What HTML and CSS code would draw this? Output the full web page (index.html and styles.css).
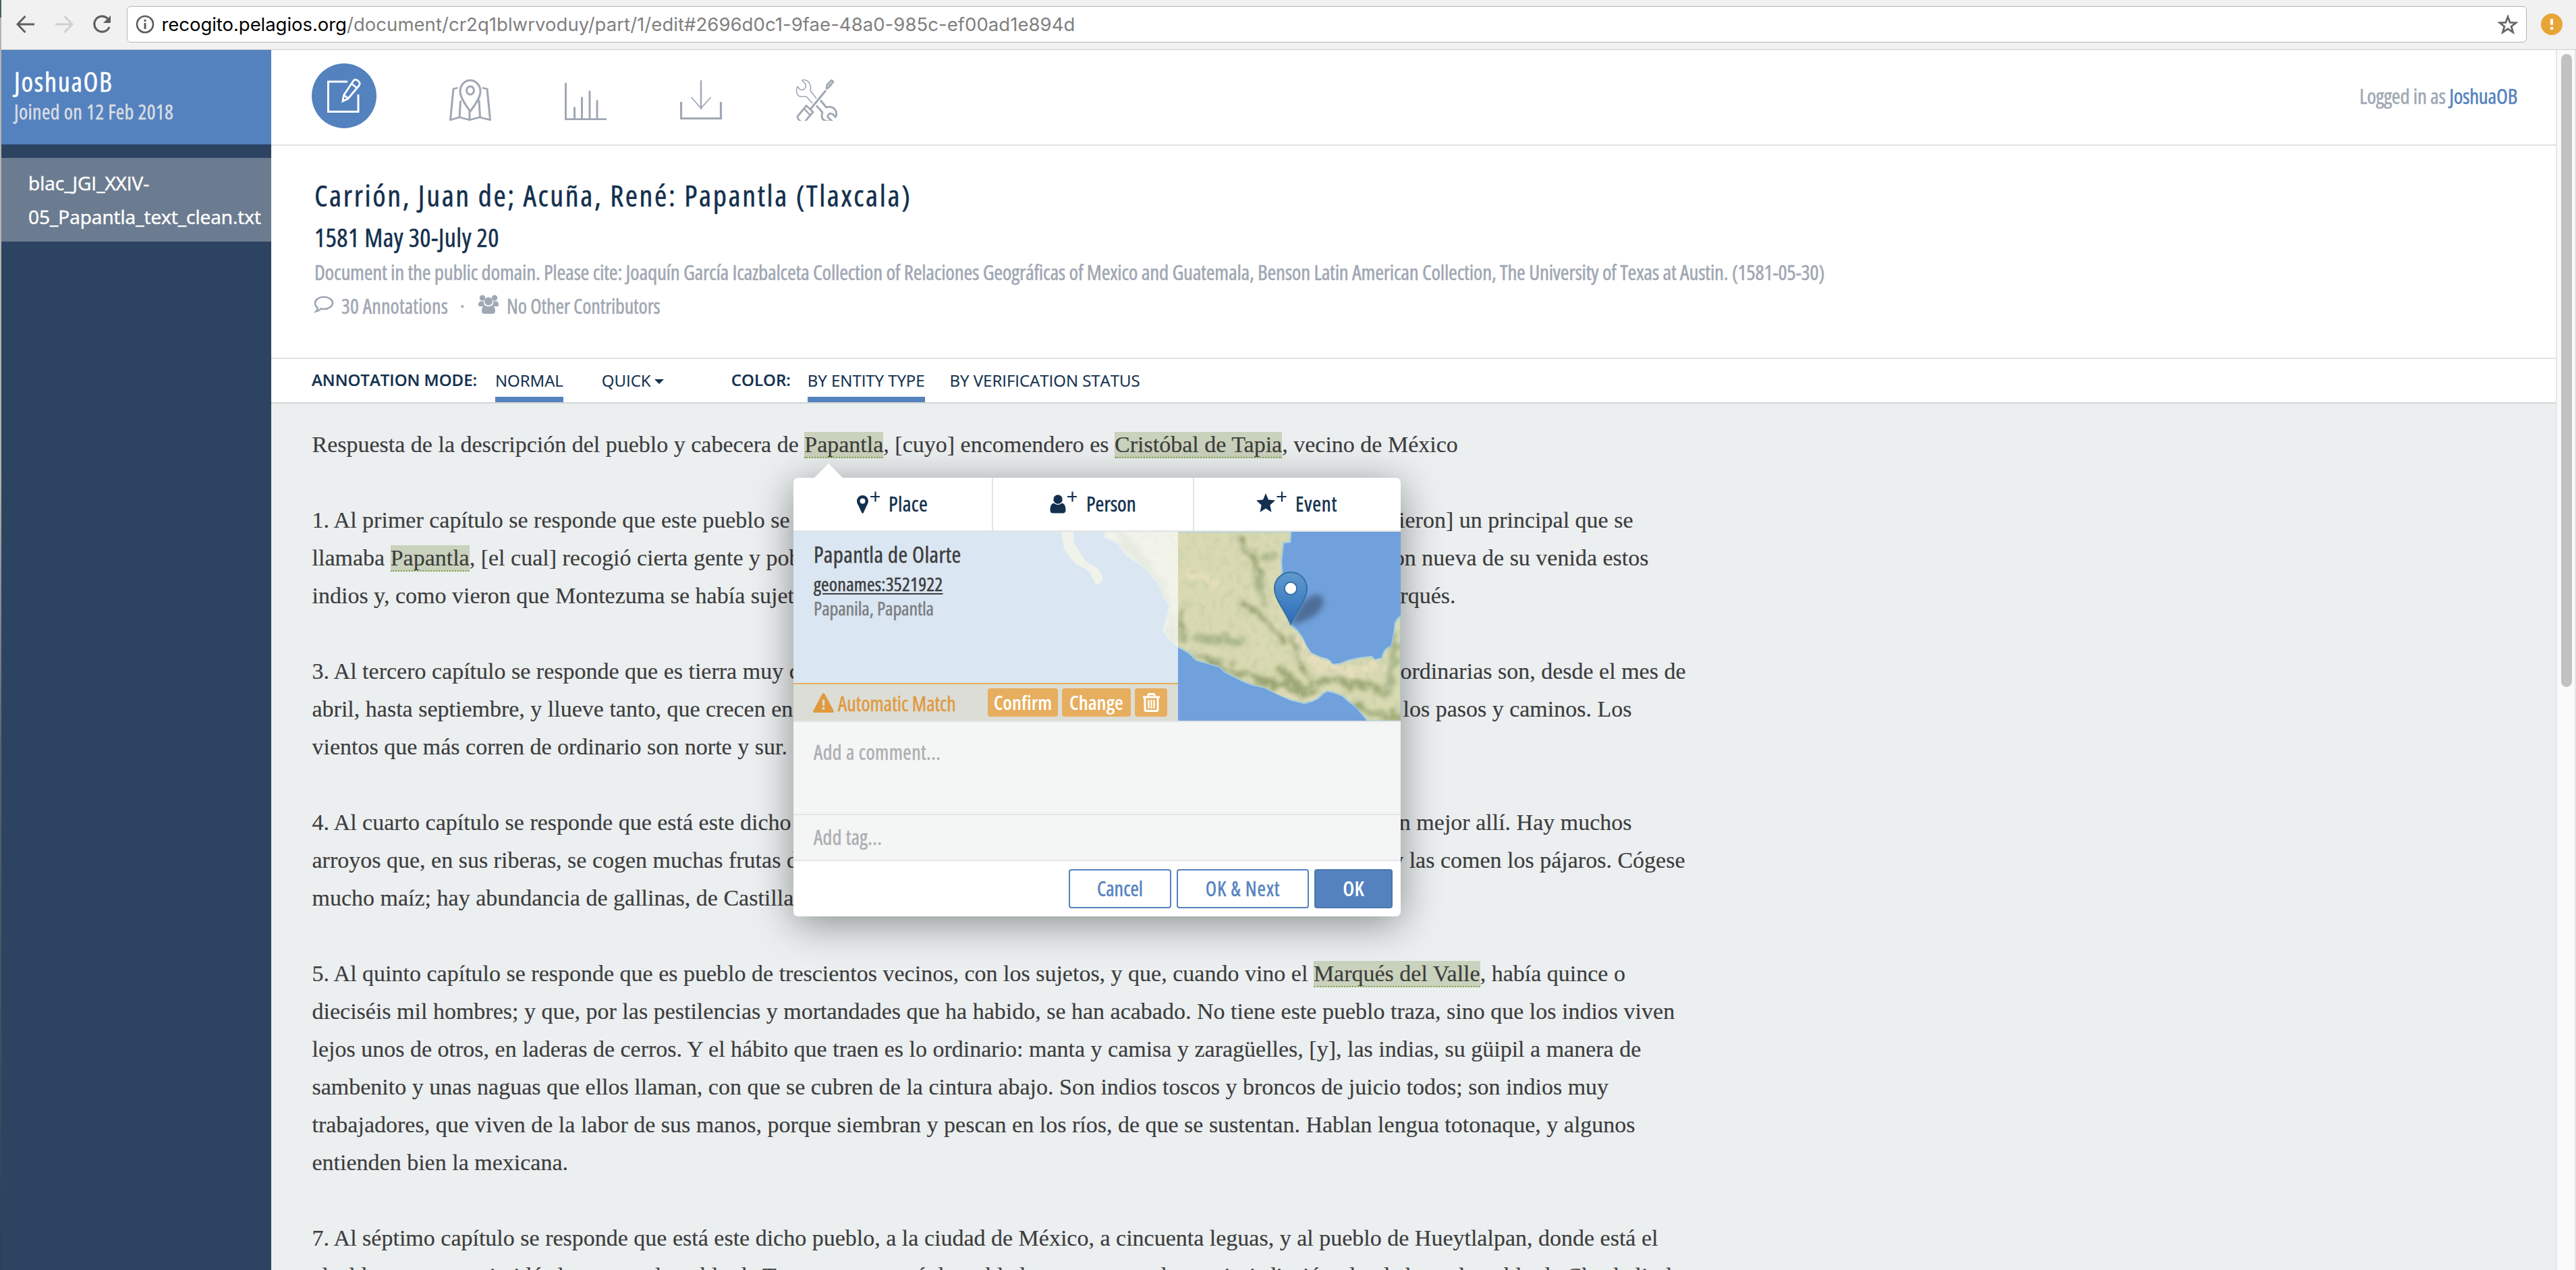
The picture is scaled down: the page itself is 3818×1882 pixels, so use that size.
FILE: index.html
```html
<!DOCTYPE html>
<html lang="es">
<head>
<meta charset="utf-8">
<title>Recogito</title>
<link rel="stylesheet" href="styles.css">
</head>
<body>
<div class="chrome">
  <svg class="nav-btn" viewBox="0 0 28 28"><path d="M27 14H2M13.500 2L2 14l11.500 12" fill="none" stroke="#5f5f5f" stroke-width="3"/></svg>
  <svg class="nav-btn" viewBox="0 0 28 28"><path d="M1 14h25M14.500 2L26 14 14.500 26" fill="none" stroke="#cfcfcf" stroke-width="3"/></svg>
  <svg class="nav-btn" viewBox="0 0 28 28"><path d="M22.500 5.500A11.500 11.500 0 1 0 25 18" fill="none" stroke="#5f5f5f" stroke-width="3.200"/><path d="M27 1v11H16z" fill="#5f5f5f"/></svg>
  <div class="url-bar">
    <svg class="info" viewBox="0 0 28 28"><circle cx="14" cy="14" r="12" fill="none" stroke="#5c5c5c" stroke-width="2.600"/><path d="M12.500 12h3v9h-3zM12.500 7h3v3h-3z" fill="#5c5c5c"/></svg>
    <div class="url"><span class="domain">recogito.pelagios.org</span>/document/cr2q1blwrvoduy/part/1/edit#2696d0c1-9fae-48a0-985c-ef00ad1e894d</div>
    <svg class="star" viewBox="0 0 30 30"><path d="M15 4l3.200 8.400 9 .3-7.100 5.500 2.500 8.600L15 21.800l-7.600 5 2.500-8.600-7.100-5.500 9-.3z" fill="none" stroke="#666" stroke-width="2.800"/></svg>
  </div>
  <svg class="alert" viewBox="0 0 32 32"><circle cx="16" cy="16" r="16" fill="#e8a537"/><path d="M14 8h4v9h-4zM14 20h4v4h-4z" fill="#fff"/></svg>
</div>

<div class="page">
  <aside class="sidebar">
    <div class="owner">
      <div class="owner-name">JoshuaOB</div>
      <div class="owner-since">Joined on 12 Feb 2018</div>
    </div>
    <div class="file">blac_JGI_XXIV-<br>05_Papantla_text_clean.txt</div>
  </aside>

  <main class="main">
    <header class="topbar">
      <div class="tabs">
        <div class="tab-active">
          <svg width="52" height="52" viewBox="0 0 52 52" fill="none" stroke="#fff" stroke-width="3"><path d="M31 5H2.500v44.500H47V24"/><path d="M40 3.500c2-2.500 5-1.500 7 .5s3 4.500 1 7L31.500 30.500 24 34l1.500-9zM36.500 7.500l9 7.500M26 25l6 5" stroke-width="2.800"/></svg>
        </div>
        <svg class="tab" viewBox="0 0 62 62" fill="none" stroke="#9fa7b3" stroke-width="3" stroke-linecap="round" stroke-linejoin="round"><path d="M31 48C25 40 16 28 16 18.500a15 16.500 0 0 1 30 0C46 28 37 40 31 48z"/><ellipse cx="31" cy="17" rx="5.500" ry="6"/><path d="M11 15l-5 1.500L1.500 70 15 65.500l15 4.500 15-4.500L60.500 70 56 16.500 50 15M16.500 38L15 65M30 54v15M44 37l1.500 28" transform="translate(0 .5) scale(1 .86)"/></svg>
        <svg class="tab" viewBox="0 0 62 62" fill="none" stroke="#9fa7b3" stroke-width="3" stroke-linecap="round"><path d="M1.500 3v57.500H61M14.500 42v18M25.500 26v34M37 16v44M48 31v29" transform="translate(0 4) scale(1 .92)"/></svg>
        <svg class="tab" viewBox="0 0 62 62" fill="none" stroke="#9fa7b3"><path d="M1.500 34v24.500h59V34" stroke-width="3.200"/><path d="M31 2v43" stroke-width="2.400"/><path d="M16.500 27L31 43.500l14.500-16.500" stroke-width="1.800"/></svg>
        <svg class="tab" viewBox="0 0 62 62" fill="none" stroke="#9fa7b3" stroke-linejoin="round"><path d="M31 29L22 17c2-8-2-14-8-15.500-2-.5-4 0-4 1l5 5v5l-3 3.500H7L3 11c-3 6-1 15 5 15h8l9 10" stroke-width="1.600"/><path d="M37 34l8.500 10.500c7-2 14 1 15 8 .3 3 0 5-1 6.500l-4.500-4.500-4-1-3 3v3l6 5c-4 2-12 1-14.500-4-1-4-.5-6 .5-8.500L31 42" stroke-width="2.800" transform="translate(0 -2.500)"/><path d="M22 45l23-28" stroke-width="3"/><path d="M46 15l1-4.500L53.500 4l2.500 2-5.500 7.500-4 3zM16 41.500l10 9.500-3 3.500-10 12c-5-1-10-4-10-9L13 45.500z" stroke-width="2.800" transform="translate(0 -2)"/><path d="M49.500 10.500l2.500-3" stroke-width="2"/><path d="M13 44l8.500 9.500" stroke-width="2.600"/></svg>
      </div>
      <div class="login">Logged in as <span class="login-name">JoshuaOB</span></div>
    </header>

    <section class="doc-head">
      <h1>Carrión, Juan de; Acuña, René: Papantla (Tlaxcala)</h1>
      <h2>1581 May 30-July 20</h2>
      <p class="license">Document in the public domain. Please cite: Joaquín García Icazbalceta Collection of Relaciones Geográficas of Mexico and Guatemala, Benson Latin American Collection, The University of Texas at Austin. (1581-05-30)</p>
      <div class="stats">
        <svg class="ico-comment" viewBox="0 0 30 26"><path d="M15 2c7 0 13 4 13 9s-6 9-13 9c-1.500 0-3-.2-4.300-.5C9 21.500 6.500 23 3.500 23.500c1.600-1.500 2.300-3.500 2.300-5.500C3.400 16.300 2 14 2 11c0-5 6-9 13-9z" fill="none" stroke="#9fa7b3" stroke-width="2.600"/></svg>
        <span class="stat-ann">30 Annotations</span>
        <span class="stat-dot">·</span>
        <svg class="ico-users" viewBox="0 0 32 28" fill="#9fa7b3"><circle cx="7" cy="4.500" r="4.200"/><circle cx="25" cy="4.500" r="4.200"/><path d="M1 15c0-4 1.500-5.500 4-5.500h4c0 4 .5 6 3 7.500H4c-2 0-3-.5-3-2zM31 15c0-4-1.500-5.500-4-5.500h-4c0 4-.5 6-3 7.500h8c2 0 3-.5 3-2z"/><circle cx="16" cy="9.500" r="6"/><path d="M6 24c0-5 2-8 5-8.500 3 2.300 7 2.300 10 0 3 .5 5 3.500 5 8.500 0 3-2 4-4 4H10c-2 0-4-1-4-4z"/></svg>
        <span class="stat-con">No Other Contributors</span>
      </div>
    </section>

    <nav class="modes">
      <b class="m-label">ANNOTATION MODE:</b>
      <span class="m-item on">NORMAL</span>
      <span class="m-item quick">QUICK<i class="caret"></i></span>
      <b class="m-label color">COLOR:</b>
      <span class="m-item on">BY ENTITY TYPE</span>
      <span class="m-item verify">BY VERIFICATION STATUS</span>
    </nav>

    <article class="text">
      <p>Respuesta de la descripción del pueblo y cabecera de <mark>Papantla</mark>, [cuyo] encomendero es <mark>Cristóbal de Tapia</mark>, vecino de México</p>
      <div class="para">
        <p class="split w1"><span>1. Al primer capítulo se responde que este pueblo se dice</span><span>[pusieron] un principal que se</span></p>
        <p class="split w2"><span>llamaba <mark>Papantla</mark>, [el cual] recogió cierta gente y pobló</span><span>con nueva de su venida estos</span></p>
        <p class="split w3"><span>indios y, como vieron que Montezuma se había sujetado</span><span>Marqués.</span></p>
      </div>
      <div class="para">
        <p class="split w4"><span>3. Al tercero capítulo se responde que es tierra muy cálida</span><span>ordinarias son, desde el mes de</span></p>
        <p class="split w5"><span>abril, hasta septiembre, y llueve tanto, que crecen en</span><span>los pasos y caminos. Los</span></p>
        <p>vientos que más corren de ordinario son norte y sur.</p>
      </div>
      <div class="para">
        <p class="split w5"><span>4. Al cuarto capítulo se responde que está este dicho</span><span>dan mejor allí. Hay muchos</span></p>
        <p class="split w6"><span>arroyos que, en sus riberas, se cogen muchas frutas de</span><span>y las comen los pájaros. Cógese</span></p>
        <p>mucho maíz; hay abundancia de gallinas, de Castilla</p>
      </div>
      <div class="para">
        <p>5. Al quinto capítulo se responde que es pueblo de trescientos vecinos, con los sujetos, y que, cuando vino el <mark>Marqués del Valle</mark>, había quince o</p>
        <p>dieciséis mil hombres; y que, por las pestilencias y mortandades que ha habido, se han acabado. No tiene este pueblo traza, sino que los indios viven</p>
        <p>lejos unos de otros, en laderas de cerros. Y el hábito que traen es lo ordinario: manta y camisa y zaragüelles, [y], las indias, su güipil a manera de</p>
        <p>sambenito y unas naguas que ellos llaman, con que se cubren de la cintura abajo. Son indios toscos y broncos de juicio todos; son indios muy</p>
        <p>trabajadores, que viven de la labor de sus manos, porque siembran y pescan en los ríos, de que se sustentan. Hablan lengua totonaque, y algunos</p>
        <p>entienden bien la mexicana.</p>
      </div>
      <div class="para">
        <p>7. Al séptimo capítulo se responde que está este dicho pueblo, a la ciudad de México, a cincuenta leguas, y al pueblo de Hueytlalpan, donde está el</p>
        <p class="split w7"><span>alcalde mayor, a veintidós leguas, y al pueblo de Tuzapan, que está despoblado y caen</span><span>de esta jurisdicción, donde hay, al pueblo de Chachalintla</span></p>
      </div>
    </article>
  </main>
  <div class="scroll"><div class="thumb"></div></div>
</div>
<div class="window-edge"></div>

<div class="popup">
  <div class="kinds">
    <div class="kind place"><svg width="34" height="37" viewBox="0 0 34 37"><path d="M8.500 7a8.500 8.500 0 0 1 8.500 8.500c0 3-1.500 5-2.700 7.500L9.700 33c-.5 1-1.900 1-2.400 0L2.700 23C1.500 20.500 0 18.500 0 15.500A8.500 8.500 0 0 1 8.500 7zm0 4.500a4 4 0 1 0 0 8 4 4 0 0 0 0-8z" fill="#13304e"/><path d="M27.500 1.500v15M20 9h14" stroke="#13304e" stroke-width="2.200"/></svg>Place</div>
    <div class="kind person"><svg width="40" height="37" viewBox="0 0 40 37"><circle cx="12" cy="13" r="6.700" fill="#13304e"/><path d="M6 18.500c3.500 3.200 8.500 3.200 12 0 4 1 5.500 5 5.500 10.500 0 3-2 4.500-4 4.500H4.500c-2.500 0-4-1.500-4-4.500C.500 23.500 2 19.500 6 18.500z" fill="#13304e"/><path d="M33.500 1.500v15M26 9h14" stroke="#13304e" stroke-width="2.200"/></svg>Person</div>
    <div class="kind event"><svg width="45" height="37" viewBox="0 0 45 37"><path d="M14 4l4 9.500 10 1-7.600 7L22.500 32 14 26.500 5.500 32l2.100-10.500-7.600-7 10-1z" fill="#13304e"/><path d="M38 1.500v15M30.500 9h14" stroke="#13304e" stroke-width="2.200"/></svg>Event</div>
  </div>

  <div class="match">
    <svg class="map" viewBox="0 0 900 280">
      <defs>
        <path id="mainland" d="M462 0L462 9 470 12 482 17 488 28 495 35 508 44 520 52 532 66 543 79 548 95 558 109 554 128 548 145 556 158 570 170 587 180 597 190 615 195 632 200 640 208 654 215 668 222 681 227 697 230 711 237 724 243 737 249 757 254 768 251 777 247 784 240 791 236 801 238 814 243 824 252 834 259 843 270 851 280H900V125L895 130 892 135 890 152 887 169 880 173 876 177 872 188 861 190 857 185 840 187 822 191 810 196 799 197 795 192 791 189 780 186 767 180 760 170 754 157 747 147 737 138 728 110 724 85 724 59 723 42 726 16 736 15 737 0z"/>
        <clipPath id="land-clip"><use href="#mainland"/></clipPath>
        <filter id="relief" x="0" y="0" width="100%" height="100%"><feTurbulence type="fractalNoise" baseFrequency=".09 .07" numOctaves="4" seed="8"/><feColorMatrix values="0 0 0 0 .55  0 0 0 0 .61  0 0 0 0 .4  0 3 0 0 -1.400"/></filter>
        <filter id="rough" x="-10%" y="-10%" width="120%" height="120%"><feTurbulence type="fractalNoise" baseFrequency=".06" numOctaves="4" seed="3"/><feDisplacementMap in="SourceGraphic" scale="26" xChannelSelector="R" yChannelSelector="G"/><feGaussianBlur stdDeviation="3"/></filter>
        <filter id="soft" x="-20%" y="-20%" width="140%" height="140%"><feGaussianBlur stdDeviation="4.500"/></filter>
        <linearGradient id="pin" x1="0" y1="0" x2="0" y2="1"><stop offset="0" stop-color="#5f9bce"/><stop offset="1" stop-color="#2e6cba"/></linearGradient>
      </defs>
      <rect width="900" height="280" fill="#70a1dc"/>
      <use href="#mainland" fill="#dadab2" stroke="#a9d0dc" stroke-width="2.500"/>
      <path d="M397 0L401 25 409 37 420 49 431 54 439 60 444 70 449 79 455 76 459 70 456 62 451 55 443 49 434 45 425 31 415 15V0z" fill="#d3d8b4" stroke="#96c0dc" stroke-width="1"/>
      <g clip-path="url(#land-clip)">
        <g filter="url(#rough)" fill="none" stroke-linecap="round">
          <path d="M745 160l35 38 52 10 50-14M690 230l50 14 30-4M590 60l40 20" stroke="#e8dfbd" stroke-width="12"/>
          <path d="M664 10l16 26 12 32M668 105l34 28 25 28M574 110l5 50M594 185l76 26 45 10M741 162l4 26 18 22" stroke="#939f6d" stroke-width="8"/>
          <path d="M685 222l85 14M770 222l50 0 60 16M836 262l60 14M722 205l34 34" stroke="#9ba873" stroke-width="12"/>
          <path d="M480 0l30 35 40 60 15 60M600 158l60 4M688 70l6 34M700 36l16 0M884 228l10-70" stroke="#a9b58a" stroke-width="13"/>
        </g>
        <rect width="900" height="280" filter="url(#relief)" opacity=".6"/>
      </g>
      <path d="M738 138c8-24 20-42 38-45 14 2 12 18-2 30-12 8-22 12-36 15z" fill="#2a3a55" opacity=".5" filter="url(#soft)"/>
      <path d="M737 137c-8-20-24-37-24-53a24 24 0 0 1 48 0c0 16-16 33-24 53z" fill="url(#pin)" stroke="#356fa5" stroke-width="2"/>
      <circle cx="737" cy="84" r="9.200" fill="#fff" stroke="#356fa5" stroke-width="2"/>
    </svg>
    <div class="info-card">
      <div class="gaz">
        <div class="gaz-title">Papantla de Olarte</div>
        <div><span class="gaz-id">geonames:3521922</span></div>
        <div class="gaz-names">Papanila, Papantla</div>
      </div>
      <div class="warn">
        <svg width="31" height="29" viewBox="0 0 31 29"><path d="M13.500 1.500c.9-1.800 3.100-1.800 4 0L30.500 26c.8 1.500 0 3-2 3h-26c-2 0-2.800-1.500-2-3z" fill="#e09a3d"/><path d="M13.500 10h4l-.5 9h-3zM13.700 21h3.600v3.600h-3.600z" fill="#dcddd6"/></svg>
        <span class="warn-text">Automatic Match</span>
        <span class="wbtn confirm">Confirm</span>
        <span class="wbtn change">Change</span>
        <span class="wbtn trash"><svg width="25" height="28" viewBox="0 0 25 28" fill="none" stroke="#fff"><path d="M0 6h25" stroke-width="3"/><path d="M7.500 5l1.200-3.500h7.600L17.500 5M3 6v18.500c0 1 .8 2 2 2h15c1.200 0 2-1 2-2V6" stroke-width="3"/><path d="M8.500 10v13M12.500 10v13M16.500 10v13" stroke-width="2.300"/></svg></span>
      </div>
    </div>
  </div>

  <div class="comment">Add a comment...</div>
  <div class="tag">Add tag...</div>
  <div class="actions">
    <div class="btn cancel">Cancel</div>
    <div class="btn next">OK &amp; Next</div>
    <div class="btn ok">OK</div>
  </div>
</div>
</body>
</html>
```
FILE: styles.css
```css
* { box-sizing: border-box; }
html, body { height: 100%; }
body {
  margin: 0;
  height: 1882px;
  overflow: hidden;
  display: flex;
  flex-direction: column;
  background: #fff;
  font-family: "Open Sans", sans-serif;
  font-stretch: 75%;
  -webkit-text-stroke: .5px currentColor;
  position: relative;
}
h1, h2, p { margin: 0; font-weight: inherit; }
svg { display: block; flex: none; }

/* browser toolbar */
.chrome {
  flex: none;
  height: 74px;
  background: #f1f1f1;
  border-bottom: 1px solid #ccc;
  display: flex;
  align-items: center;
  padding: 0 20px 2px 24px;
  -webkit-text-stroke: 0;
}
.nav-btn { width: 28px; height: 28px; margin-right: 28.500px; }
.url-bar {
  margin-left: -6px;
  width: 3558px;
  height: 54px;
  background: #fff;
  border: 1px solid #b5b5b5;
  border-radius: 6px;
  display: flex;
  align-items: center;
  padding: 0 12px;
}
.info { width: 28px; height: 28px; }
.url {
  flex: 1;
  margin-left: 11px;
  font: 27.500px/50px Inter, sans-serif;
  font-stretch: 100%;
  color: #7f7f7f;
  white-space: nowrap;
  letter-spacing: .05px;
}
.domain { color: #000; letter-spacing: -.05px; }
.star { width: 30px; height: 30px; }
.alert { width: 32px; height: 32px; margin-left: 21px; }

.page { flex: 1; min-height: 0; display: flex; }
.window-edge {
  position: absolute;
  left: 0; top: 0;
  width: 2px; height: 100%;
  background: linear-gradient(#3f6b52 0 26px, #b5b3ae 26px 700px, #5a6470 1100px, #2c3e55 1882px);
}

/* sidebar */
.sidebar { flex: none; width: 402px; background: #2c4461; overflow: hidden; }
.owner { height: 140px; padding: 27px 0 0 21px; background: #5482bf; color: #fff; }
.owner-name { font-size: 40px; line-height: 40px; letter-spacing: 1.700px; }
.owner-since { font-size: 30px; line-height: 36px; letter-spacing: .35px; color: #dadde2; margin-top: 7px; }
.file {
  margin-top: 20px;
  height: 124px;
  padding: 12px 0 0 42px;
  background: #6c7c90;
  color: #fff;
  font-size: 28px;
  font-stretch: 100%;
  line-height: 50px;
  white-space: nowrap;
}

.main { flex: 1; min-width: 0; display: flex; flex-direction: column; overflow: hidden; }
.topbar {
  flex: none;
  height: 142px;
  border-bottom: 2px solid #e3e3e3;
  display: flex;
  justify-content: space-between;
  padding: 20px 57px 0 60px;
}
.tabs { display: flex; }
.tab-active {
  width: 96px; height: 96px;
  border-radius: 50%;
  background: #5482bf;
  display: flex;
  align-items: center;
  justify-content: center;
}
.tab { width: 62px; height: 62px; margin: 23px 0 0 109px; }
.tab-active + .tab { margin-left: 108px; }
.login { font-size: 31px; line-height: 42px; margin-top: 27px; letter-spacing: -.28px; color: #9fa7b3; }
.login-name { color: #5482bf; }

.doc-head { flex: none; height: 316px; border-bottom: 2px solid #e3e3e3; padding: 46px 0 0 64px; white-space: nowrap; }
h1 { font-size: 44px; line-height: 54px; letter-spacing: 2.640px; color: #13304e; }
h2 { font-size: 38px; line-height: 54px; letter-spacing: .5px; color: #13304e; margin-top: 8px; }
.license { font-size: 31px; line-height: 44px; letter-spacing: -.255px; color: #9fa7b3; margin-top: 3px; }
.stats { display: flex; align-items: center; height: 44px; margin-top: 6px; font-size: 30px; color: #9fa7b3; }
.ico-comment { width: 30px; height: 26px; margin: -4px 0 0 -1px; }
.stat-ann { width: 176px; margin-left: 11px; letter-spacing: .2px; }
.stat-dot { width: 27px; }
.ico-users { width: 32px; height: 28px; margin: -4px 0 0 -1px; }
.stat-con { margin-left: 11px; letter-spacing: -.12px; }

.modes {
  flex: none;
  height: 66px;
  border-bottom: 2px solid #d3d6d7;
  display: flex;
  padding-left: 60px;
  font-size: 24px;
  font-stretch: 100%;
  line-height: 62px;
  color: #13304e;
  white-space: nowrap;
  -webkit-text-stroke-width: .2px;
}
.m-label { font-weight: 600; width: 272px; }
.m-label.color { width: 113px; }
.m-item { display: flex; align-items: center; height: 64px; }
.m-item.on { box-shadow: inset 0 -8px #5482bf; }
.quick { width: 192px; margin-left: 57px; }
.verify { margin-left: 37px; }
.caret {
  margin: 2px 0 0 5px;
  border: 7px solid transparent;
  border-top-color: #13304e;
  border-bottom: 0;
}

/* document text */
.text {
  flex: 1;
  min-height: 0;
  overflow: hidden;
  background: #ebeff0;
  padding: 33px 0 0 60.500px;
  font: 34px/56px "Liberation Serif", serif;
  color: #3d3d3d;
  white-space: nowrap;
  -webkit-text-stroke-width: .2px;
}
.para { margin-top: 56px; }
mark { background: #c9d2bc; color: inherit; border-bottom: 2px dotted #86a352; }
.split { display: flex; justify-content: space-between; }
.w1 { width: 1958px; }
.w2 { width: 1981px; }
.w3 { width: 1695px; }
.w4 { width: 2036px; }
.w5 { width: 1956px; }
.w6 { width: 2035px; }
.w7 { width: 2031px; }

.scroll {
  flex: none;
  width: 30px;
  border: solid #e6e6e6;
  border-width: 0 2px;
  background: #fafafa;
  padding: 6px 0 0 6px;
}
.thumb { width: 16px; height: 938px; border-radius: 8px; background: #c1c1c1; }

/* annotation popup */
.popup {
  position: absolute;
  left: 1176px; top: 708px;
  width: 900px; height: 650px;
  border-radius: 7px;
  background: #fff;
  box-shadow: 0 10px 60px rgba(0, 0, 0, .42);
  display: flex;
  flex-direction: column;
}
.popup::before {
  content: "";
  position: absolute;
  left: 30px; top: -21px;
  border: 22px solid transparent;
  border-top: 0;
  border-bottom-color: #fff;
}
.kinds { flex: none; height: 80px; border-bottom: 2px solid #e4e4e4; display: flex; }
.kind {
  border-right: 2px solid #e4e4e4;
  display: flex;
  font-size: 31px;
  line-height: 77px;
  color: #13304e;
}
.kind svg { margin-top: 19px; }
.place { width: 296px; padding-left: 94px; gap: 13px; letter-spacing: .4px; }
.person { width: 298px; padding-left: 84px; gap: 14px; }
.event { flex: 1; border: 0; padding-left: 92px; gap: 13px; letter-spacing: .8px; }

.match { flex: none; height: 282px; position: relative; border-bottom: 2px solid #e4e4e4; }
.map { position: absolute; left: 0; top: 0; width: 900px; height: 280px; }
.info-card {
  position: relative;
  width: 570px; height: 280px;
  background: rgba(249, 250, 248, .78);
  display: flex;
  flex-direction: column;
}
.gaz { flex: 1; padding: 12px 0 0 30px; color: #3d3d3d; }
.gaz-title { font-size: 33px; line-height: 44px; letter-spacing: .4px; }
.gaz-id {
  display: inline-block;
  font-size: 28px;
  line-height: 36px;
  letter-spacing: .2px;
  margin-top: 3px;
  text-decoration: underline;
  text-decoration-thickness: 2px;
  text-underline-offset: 3px;
}
.gaz-names { font-size: 28px; line-height: 36px; letter-spacing: -.12px; color: #7c7f82; margin-top: 0; }
.warn {
  flex: none;
  height: 56px;
  border-top: 2px solid #e6ae5b;
  background: #dcddd6;
  display: flex;
  align-items: center;
  padding-left: 29px;
}
.warn-text { font-size: 30px; margin: 3px 0 0 6px; width: 222px; color: #e09a3d; }
.wbtn {
  height: 42px;
  margin-top: -1px;
  border-radius: 4px;
  background: #e6ae5e;
  color: #fff;
  font-weight: 600;
  font-size: 29.500px;
  line-height: 41px;
  display: flex;
  align-items: center;
  justify-content: center;
  -webkit-text-stroke: 0;
}
.confirm { width: 104px; }
.change { width: 102px; margin-left: 6px; }
.trash { width: 48px; margin-left: 6px; }

.comment, .tag { flex: none; padding-left: 30px; background: #f4f6f6; border-bottom: 2px solid #e4e4e4; color: #acafb0; font-size: 30px; }
.comment { height: 138px; line-height: 44px; padding-top: 23px; letter-spacing: .42px; }
.tag { height: 68px; line-height: 66px; letter-spacing: .35px; }
.actions { flex: 1; display: flex; justify-content: flex-end; gap: 8px; padding: 12px 12px 0 0; }
.btn {
  height: 58px;
  border: 2px solid #5482bf;
  border-radius: 4px;
  color: #5482bf;
  font-size: 30px;
  line-height: 54px;
  text-align: center;
}
.cancel { width: 152px; }
.next { width: 196px; letter-spacing: .9px; }
.ok { width: 116px; background: #5482bf; border-color: #4a76b0; color: #fff; font-weight: 600; -webkit-text-stroke: 0; }
```
